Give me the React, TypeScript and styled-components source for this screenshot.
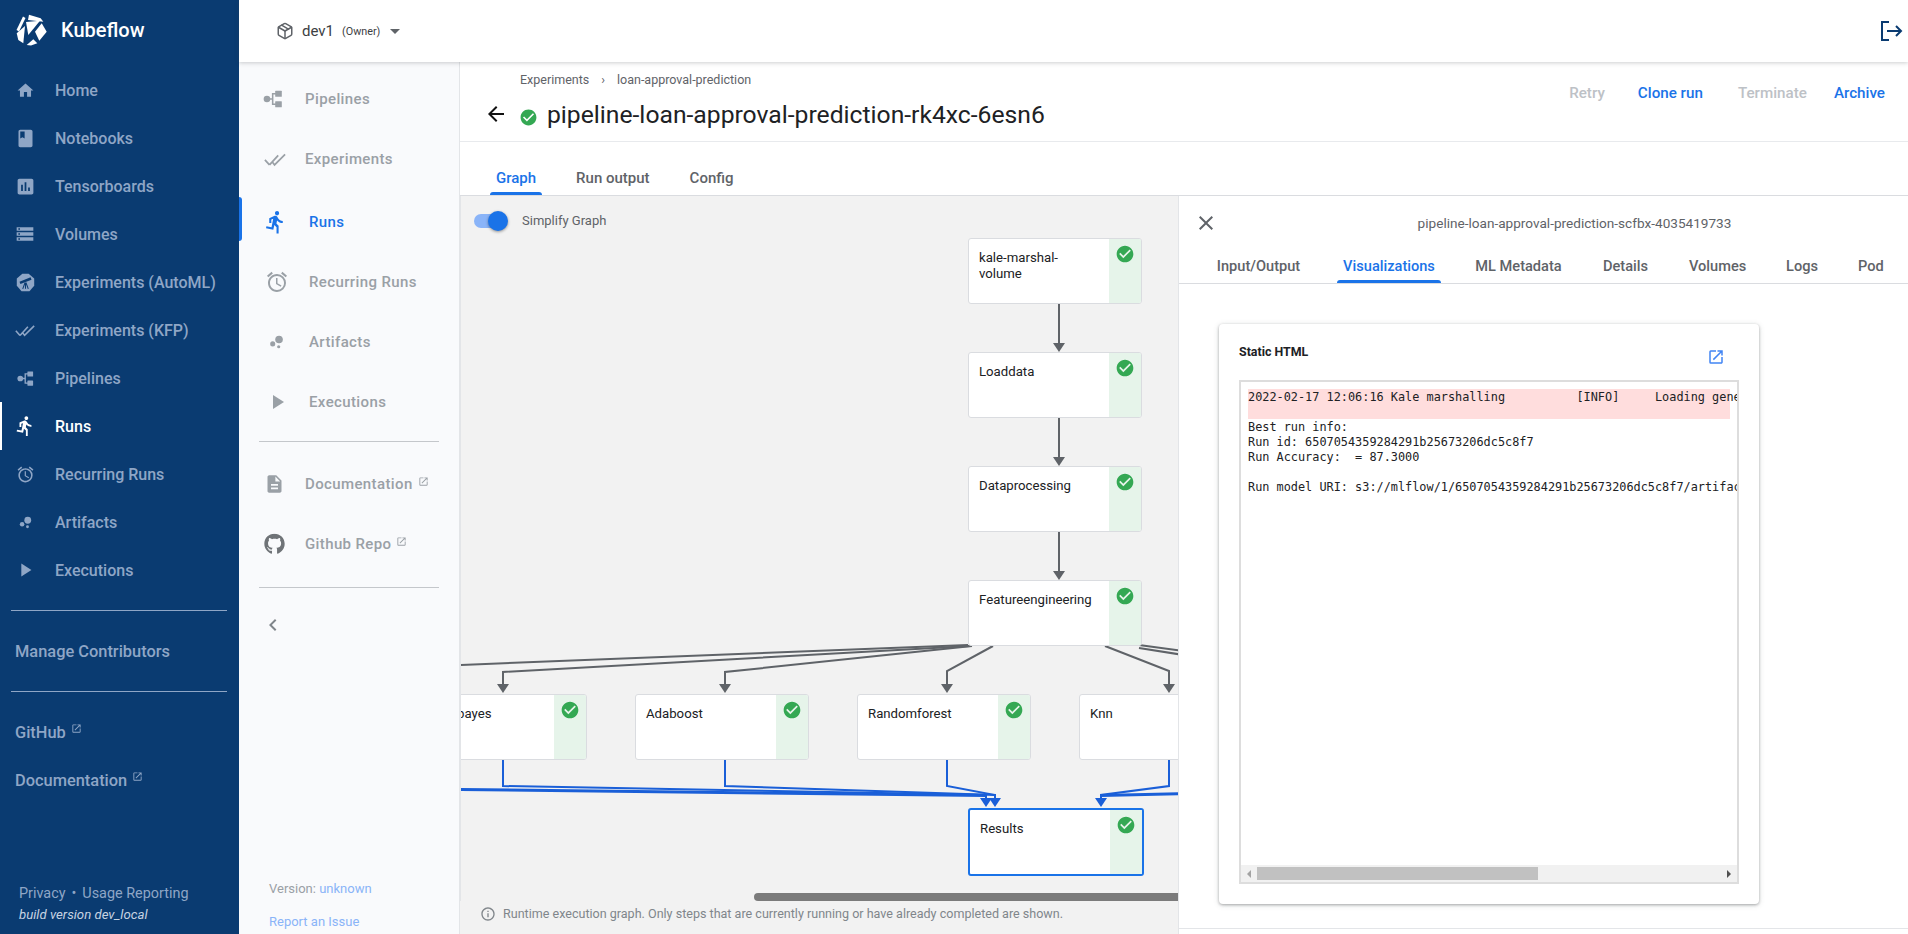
import type { ReactNode } from 'react';
import styled, { createGlobalStyle } from 'styled-components';
import { Package } from 'lucide-react';
import { FaGithub } from 'react-icons/fa';
import {
  MdAlarm,
  MdArrowBack,
  MdArrowDropDown,
  MdAssessment,
  MdBook,
  MdBubbleChart,
  MdCheckCircle,
  MdChevronLeft,
  MdClose,
  MdDescription,
  MdDirectionsRun,
  MdHome,
  MdInfoOutline,
  MdOpenInNew,
  MdPlayArrow,
  MdStorage,
} from 'react-icons/md';

const GlobalStyle = createGlobalStyle`
  html, body {
    margin: 0;
    height: 100%;
    overflow: hidden;
    background: #fff;
    font-family: Roboto, "Liberation Sans", sans-serif;
  }
  #root { height: 100%; }
  * { box-sizing: border-box; }
`;

const Page = styled.div`
  display: flex;
  width: 1908px;
  height: 934px;
  overflow: hidden;
`;

/* ---------- dark left navigation ---------- */

const LeftNav = styled.nav`
  width: 239px;
  flex: none;
  display: flex;
  flex-direction: column;
  background: #0a3b71;
  color: #8fa6c6;
`;

const Brand = styled.div`
  height: 66px;
  display: flex;
  align-items: flex-start;
  gap: 13px;
  padding: 14px 0 0 16px;
  color: #fff;
  font-size: 20px;
  font-weight: 500;
  line-height: 32px;
`;

const LeftItem = styled.div<{ $active?: boolean }>`
  position: relative;
  height: 48px;
  display: flex;
  align-items: center;
  font-size: 16px;
  font-weight: 500;
  color: ${({ $active }) => ($active ? '#fff' : '#8fa6c6')};
  border-left: 2px solid ${({ $active }) => ($active ? '#fff' : 'transparent')};
`;

const LeftIcon = styled.span`
  width: 46px;
  margin-right: 7px;
  display: flex;
  align-items: center;
  justify-content: center;
`;

const LeftRule = styled.hr<{ $top?: number }>`
  width: 216px;
  margin: ${({ $top }) => $top ?? 0}px 0 0 11px;
  border: 0;
  border-top: 1px solid #8fa6c6;
`;

const LeftLink = styled.div<{ $height: number; $top?: number }>`
  height: ${({ $height }) => $height}px;
  margin-top: ${({ $top }) => $top ?? 0}px;
  display: flex;
  align-items: center;
  padding-left: 15px;
  font-size: 16.4px;
  font-weight: 500;
`;

const Sup = styled.span<{ $up?: number }>`
  display: inline-flex;
  margin: -${({ $up }) => $up ?? 8}px 0 0 5px;
  font-size: 11px;
`;

const LeftFooter = styled.div`
  margin-top: auto;
  padding: 0 0 9px 19px;
  font-size: 14.4px;
  line-height: 21px;
`;

const Dot = styled.span`
  margin: 0 6px;
`;

const BuildLine = styled.div`
  color: #c7d3e2;
  font-size: 13.2px;
  font-style: italic;
`;

/* ---------- top bar and body ---------- */

const RightColumn = styled.div`
  flex: 1;
  min-width: 0;
  display: flex;
  flex-direction: column;
`;

const TopBar = styled.header`
  position: relative;
  z-index: 2;
  height: 62px;
  flex: none;
  display: flex;
  align-items: center;
  padding: 0 5px 0 37px;
  background: #fff;
  box-shadow: 0 1px 4px rgba(60, 64, 67, 0.25);
  color: #5f6368;
`;

const Namespace = styled.span`
  margin-left: 8px;
  font-size: 15px;
  color: #3c4043;
`;

const Owner = styled.span`
  margin: 0 3px 0 8px;
  font-size: 10.8px;
  color: #3c4043;
`;

const LogoutSlot = styled.span`
  display: flex;
  margin-left: auto;
`;

const Body = styled.div`
  flex: 1;
  min-height: 0;
  display: flex;
`;

/* ---------- secondary navigation ---------- */

const SideNav = styled.aside`
  width: 221px;
  flex: none;
  display: flex;
  flex-direction: column;
  padding-top: 7px;
  background: #f9fafc;
  border-right: 1px solid #e3e5e8;
  color: #9aa0a6;
`;

const SideItem = styled.div<{ $active?: boolean; $indent?: number; $top?: number }>`
  position: relative;
  height: 60px;
  margin-top: ${({ $top }) => $top ?? 0}px;
  display: flex;
  align-items: center;
  font-size: 15px;
  font-weight: 500;
  letter-spacing: 0.38px;
  color: ${({ $active }) => ($active ? '#1a73e8' : '#9aa0a6')};
  padding-left: ${({ $indent }) => $indent ?? 66}px;
`;

const SideIcon = styled.span<{ $left?: number; $color?: string }>`
  position: absolute;
  left: ${({ $left }) => $left ?? 26}px;
  top: 50%;
  transform: translateY(-50%);
  display: flex;
  font-size: 24px;
  color: ${({ $color }) => $color ?? '#9aa0a6'};
`;

const ActiveBar = styled.span`
  position: absolute;
  left: 0;
  top: 5px;
  width: 3px;
  height: 44px;
  background: #1a73e8;
  border-radius: 0 3px 3px 0;
`;

const SideRule = styled.hr<{ $top: number }>`
  width: 180px;
  margin: ${({ $top }) => $top}px 0 12px 20px;
  border: 0;
  border-top: 1px solid #c4c7cb;
`;

const Collapse = styled.div`
  display: flex;
  margin: 13px 0 0 22px;
  font-size: 24px;
  color: #80868b;
`;

const SideFooter = styled.div`
  margin-top: auto;
  padding-left: 30px;
  font-size: 13px;
  color: #9aa0a6;
`;

const FooterLine = styled.div<{ $height: number }>`
  height: ${({ $height }) => $height}px;
  display: flex;
  align-items: center;
`;

const SoftLink = styled.span`
  color: #8ab4f8;
  white-space: pre;
`;

/* ---------- run details ---------- */

const Main = styled.main`
  flex: 1;
  min-width: 0;
  display: flex;
  flex-direction: column;
`;

const RunHeader = styled.div`
  height: 80px;
  flex: none;
  display: flex;
  justify-content: space-between;
  border-bottom: 1px solid #e8eaed;
`;

const TitleBlock = styled.div`
  display: flex;
  flex-direction: column;
`;

const Breadcrumb = styled.div`
  height: 34px;
  display: flex;
  align-items: center;
  padding: 0 0 0 60px;
  font-size: 12.5px;
  color: #5f6368;
`;

const CrumbArrow = styled.span`
  margin: 0 12px;
`;

const TitleRow = styled.div`
  display: flex;
  align-items: center;
  height: 36px;
  padding-left: 24px;
`;

const BackIcon = styled.span`
  display: flex;
  font-size: 24px;
  color: #111;
`;

const RunCheck = styled.span`
  display: flex;
  margin: 7px 0 0 11px;
  font-size: 19px;
  color: #34a853;
`;

const RunTitle = styled.h1`
  margin: 0 0 0 9px;
  font-size: 24.7px;
  font-weight: 400;
  color: #202124;
  white-space: nowrap;
`;

const Actions = styled.div`
  display: flex;
  padding: 20px 15px 0 0;
`;

const ActionButton = styled.button<{ $enabled?: boolean; $gap: number }>`
  height: 22px;
  margin-left: ${({ $gap }) => $gap}px;
  padding: 0 8px;
  border: 0;
  background: none;
  font: 500 15.2px Roboto, sans-serif;
  color: ${({ $enabled }) => ($enabled ? '#1a73e8' : '#bdc1c6')};
`;

const TabRow = styled.div<{ $start: number; $gap: number; $height: number }>`
  height: ${({ $height }) => $height}px;
  flex: none;
  display: flex;
  align-items: flex-end;
  gap: ${({ $gap }) => $gap}px;
  padding-left: ${({ $start }) => $start}px;
  border-bottom: 1px solid #dadce0;
`;

const Tab = styled.div<{ $active?: boolean; $width?: number; $size?: number }>`
  position: relative;
  width: ${({ $width }) => ($width ? `${$width}px` : 'auto')};
  height: 28px;
  padding: 1px 6px 0;
  text-align: center;
  white-space: nowrap;
  font-size: ${({ $size }) => $size ?? 15}px;
  font-weight: 500;
  line-height: 20px;
  color: ${({ $active }) => ($active ? '#1a73e8' : '#5f6368')};

  &::after {
    content: '';
    position: absolute;
    left: 0;
    right: 0;
    bottom: 0;
    height: 3px;
    border-radius: 3px 3px 0 0;
    background: ${({ $active }) => ($active ? '#1a73e8' : 'transparent')};
  }
`;

const Content = styled.div`
  flex: 1;
  min-height: 0;
  display: flex;
`;

/* ---------- graph ---------- */

const GraphColumn = styled.section`
  flex: 1;
  min-width: 0;
  display: flex;
  flex-direction: column;
  background: #f2f2f2;
`;

const Canvas = styled.div`
  position: relative;
  flex: 1;
  overflow: hidden;
  border-left: 1px solid #e3e5e8;
`;

const ToggleRow = styled.div`
  position: absolute;
  left: 13px;
  top: 17px;
  display: flex;
  align-items: center;
  font-size: 13px;
  color: #5f6368;
`;

const ToggleTrack = styled.span`
  position: relative;
  width: 32px;
  height: 14px;
  margin-right: 16px;
  border-radius: 7px;
  background: #8ab4f8;
`;

const ToggleThumb = styled.span`
  position: absolute;
  top: -3px;
  right: -2px;
  width: 20px;
  height: 20px;
  border-radius: 50%;
  background: #1a73e8;
  box-shadow: 0 1px 3px rgba(0, 0, 0, 0.4);
`;

const Edges = styled.svg`
  position: absolute;
  left: -1px;
  top: 0;
`;

const NodeBox = styled.div<{ $x: number; $y: number; $selected?: boolean }>`
  position: absolute;
  left: ${({ $x }) => $x - 461}px;
  top: ${({ $y }) => $y - 196}px;
  width: ${({ $selected }) => ($selected ? 176 : 174)}px;
  height: ${({ $selected }) => ($selected ? 68 : 66)}px;
  display: flex;
  background: #fff;
  border: ${({ $selected }) => ($selected ? '2px solid #1a73e8' : '1px solid #dadce0')};
  border-radius: 3px;
  overflow: hidden;
`;

const NodeLabel = styled.div`
  flex: 1;
  min-width: 0;
  padding: 11px 10px 0 10px;
  font-size: 13.2px;
  line-height: 16px;
  color: #202124;
`;

const NodeStatus = styled.div`
  width: 32px;
  flex: none;
  padding: 5px 0 0 6px;
  font-size: 20px;
  color: #34a853;
  background: #e6f4ea;
`;

const HScroll = styled.div`
  position: absolute;
  left: 293px;
  right: 0;
  bottom: 0;
  height: 8px;
  border-radius: 4px 0 0 4px;
  background: #7b7b7b;
`;

const GraphNote = styled.div`
  height: 33px;
  flex: none;
  display: flex;
  align-items: center;
  padding: 0 0 8px 20px;
  font-size: 12.55px;
  color: #80868b;
`;

const NoteIcon = styled.span`
  display: flex;
  margin-right: 7px;
  font-size: 16px;
`;

/* ---------- side panel ---------- */

const Panel = styled.section`
  width: 730px;
  flex: none;
  display: flex;
  flex-direction: column;
  background: #fff;
  border-left: 1px solid #e3e5e8;
`;

const PanelHead = styled.div`
  height: 54px;
  flex: none;
  display: flex;
  align-items: center;
  padding-left: 15px;
`;

const CloseIcon = styled.span`
  display: flex;
  font-size: 24px;
  color: #5f6368;
`;

const PanelTitle = styled.div`
  flex: 1;
  padding-left: 23px;
  text-align: center;
  font-size: 13.6px;
  color: #5f6368;
`;

const PanelBody = styled.div`
  flex: 1;
  min-height: 0;
  padding: 40px 0 0 40px;
`;

const Card = styled.div`
  width: 540px;
  height: 580px;
  display: flex;
  flex-direction: column;
  padding: 20px;
  background: #fff;
  border-radius: 4px;
  box-shadow: 0 1px 3px rgba(60, 64, 67, 0.4), 0 1px 6px rgba(60, 64, 67, 0.15);
`;

const CardHead = styled.div`
  height: 36px;
  flex: none;
  display: flex;
  justify-content: space-between;
  padding-right: 14px;
`;

const CardTitle = styled.div`
  font-size: 12.4px;
  font-weight: 700;
  line-height: 16px;
  color: #202124;
`;

const LaunchIcon = styled.span`
  display: flex;
  margin-top: 4px;
  font-size: 18px;
  color: #4285f4;
`;

const Frame = styled.div`
  flex: 1;
  min-height: 0;
  display: flex;
  flex-direction: column;
  border: 2px solid #dddddd;
`;

const LogView = styled.pre`
  flex: 1;
  min-height: 0;
  margin: 0;
  padding: 7px 0 0 7px;
  overflow: hidden;
  font-family: "DejaVu Sans Mono", "Liberation Mono", monospace;
  font-size: 11.87px;
  line-height: 15px;
  color: #202124;
`;

const ErrorLine = styled.div`
  width: 482px;
  height: 30px;
  margin-bottom: 1px;
  padding-top: 1px;
  background: #ffdddd;
  white-space: pre;
`;

const ScrollTrack = styled.div`
  height: 17px;
  flex: none;
  display: flex;
  align-items: center;
  justify-content: space-between;
  padding: 0 6px;
  background: #f1f1f1;
`;

const ScrollThumb = styled.div`
  width: 281px;
  height: 13px;
  margin-right: auto;
  margin-left: 6px;
  background: #c1c1c1;
`;

const ScrollArrow = styled.span<{ $right?: boolean }>`
  width: 0;
  height: 0;
  border-top: 4px solid transparent;
  border-bottom: 4px solid transparent;
  border-left: ${({ $right }) => ($right ? '4px solid #505050' : '0')};
  border-right: ${({ $right }) => ($right ? '0' : '4px solid #a3a3a3')};
`;

const PanelRule = styled.hr`
  margin: 24px 0 0 -40px;
  border: 0;
  border-top: 1px solid #e3e5e8;
`;

/* ---------- drawn icons ---------- */

const KubeflowLogo = () => (
  <svg width="32" height="32" viewBox="0 0 32 32" fill="#fff">
    <path d="M7 2.500 9.500 4 3 17.500.5 16z" />
    <path d="M13 .7 24.700 4.300 27.300 7.700 12 6z" />
    <path d="M10 8 24 6.700 12.300 21z" />
    <path d="M25.700 9.300 30.700 17.700 23.300 26.700 19 17.700z" />
    <path d="M.7 19.300 9 12 7.300 29.300 2.300 26z" />
    <path d="M10.700 31 17.300 25.300 21.300 29.300 15 31.500z" />
  </svg>
);

const KfpChecks = ({ size = 20 }: { size?: number }) => (
  <svg width={size} height={size} viewBox="0 0 24 24" fill="none" stroke="currentColor" strokeWidth="1.9">
    <path d="M1 13l5 5.500M6 18.500 15.500 8M8.500 14.500l3 4L23 7" />
  </svg>
);

const PipelineMark = ({ size = 20 }: { size?: number }) => (
  <svg width={size} height={size} viewBox="0 0 20 20" fill="currentColor">
    <circle cx="4.500" cy="10" r="3" />
    <rect x="12" y="2.500" width="6" height="5.500" rx="0.500" />
    <rect x="12" y="12" width="6" height="5.500" rx="0.500" />
    <path d="M4 9.300h5V4.500h4v1.400h-2.600v8.200H13v1.400H9v-4.800H4z" />
  </svg>
);

const KatibMark = () => (
  <svg width="19" height="19" viewBox="0 0 24 24">
    <path fill="currentColor" d="M8 1h8l7 6v9l-6 7H7l-6-7V7z" />
    <path stroke="#0a3b71" strokeWidth="3.200" d="M5 12.500 19 7" />
    <path stroke="#0a3b71" strokeWidth="1.300" d="M11.500 12l-3 8M12 12v8M12.500 12l3 8" />
  </svg>
);

const LogoutMark = () => (
  <svg width="22" height="22" viewBox="0 0 22 22" fill="none" stroke="#0a3b71" strokeWidth="2">
    <path d="M8 2H1v18h7M6 11h14M15 6l5 5-5 5" />
  </svg>
);

/* ---------- data ---------- */

const leftItems: { label: string; icon: ReactNode; active?: boolean }[] = [
  { label: 'Home', icon: <MdHome size={19} /> },
  { label: 'Notebooks', icon: <MdBook size={21} /> },
  { label: 'Tensorboards', icon: <MdAssessment size={21} /> },
  { label: 'Volumes', icon: <MdStorage size={20} /> },
  { label: 'Experiments (AutoML)', icon: <KatibMark /> },
  { label: 'Experiments (KFP)', icon: <KfpChecks /> },
  { label: 'Pipelines', icon: <PipelineMark size={19} /> },
  { label: 'Runs', icon: <MdDirectionsRun size={22} />, active: true },
  { label: 'Recurring Runs', icon: <MdAlarm size={19} /> },
  { label: 'Artifacts', icon: <MdBubbleChart size={17} /> },
  { label: 'Executions', icon: <MdPlayArrow size={22} /> },
];

const graphNodes = [
  { label: 'kale-marshal-volume', x: 968, y: 238 },
  { label: 'Loaddata', x: 968, y: 352 },
  { label: 'Dataprocessing', x: 968, y: 466 },
  { label: 'Featureengineering', x: 968, y: 580 },
  { label: 'Naivebayes', x: 413, y: 694 },
  { label: 'Adaboost', x: 635, y: 694 },
  { label: 'Randomforest', x: 857, y: 694 },
  { label: 'Knn', x: 1079, y: 694 },
];

const panelTabs = [
  { label: 'Input/Output', width: 101 },
  { label: 'Visualizations', width: 104, active: true },
  { label: 'ML Metadata', width: 99 },
  { label: 'Details', width: 59 },
  { label: 'Volumes', width: 69 },
  { label: 'Logs', width: 44 },
  { label: 'Pod', width: 36 },
];

const grayEdges = [
  'M1059 304V346',
  'M1059 418V460',
  'M1059 532V574',
  'M968 645 460 665',
  'M970 646 503 672V688',
  'M972 646 725 672V688',
  'M993 646 947 671V688',
  'M1105 646 1169 671V688',
  'M1139 645 1190 652',
  'M1139 648 1190 656',
];

const blueEdges = [
  'M503 760V786L986 795V802',
  'M725 760V786L995 795V802',
  'M947 760V786L995 795V802',
  'M1169 760V786L1101 795V802',
  'M455 789 986 795',
  'M455 790 986 796',
  'M1190 793 1101 795',
  'M1190 794 1101 796',
];

const grayHeads = [1059, 1059, 1059, 503, 725, 947, 1169];
const grayHeadTips = [352, 466, 580, 693, 693, 693, 693];
const blueHeads = [986, 995, 1101];

const App = () => (
  <Page>
    <GlobalStyle />
    <LeftNav>
      <Brand>
        <KubeflowLogo />
        Kubeflow
      </Brand>
      {leftItems.map(({ label, icon, active }) => (
        <LeftItem key={label} $active={active}>
          <LeftIcon>{icon}</LeftIcon>
          {label}
        </LeftItem>
      ))}
      <LeftRule $top={16} />
      <LeftLink $height={80}>Manage Contributors</LeftLink>
      <LeftRule />
      <LeftLink $height={48} $top={16}>
        GitHub
        <Sup><MdOpenInNew /></Sup>
      </LeftLink>
      <LeftLink $height={48}>
        Documentation
        <Sup><MdOpenInNew /></Sup>
      </LeftLink>
      <LeftFooter>
        <div>
          Privacy<Dot>•</Dot>Usage Reporting
        </div>
        <BuildLine>build version dev_local</BuildLine>
      </LeftFooter>
    </LeftNav>

    <RightColumn>
      <TopBar>
        <Package size={18} strokeWidth={2} />
        <Namespace>dev1</Namespace>
        <Owner>(Owner)</Owner>
        <MdArrowDropDown size={24} />
        <LogoutSlot><LogoutMark /></LogoutSlot>
      </TopBar>
      <Body>
        <SideNav>
          <SideItem>
            <SideIcon $left={23}><PipelineMark size={22} /></SideIcon>
            Pipelines
          </SideItem>
          <SideItem>
            <SideIcon $left={25}><KfpChecks size={22} /></SideIcon>
            Experiments
          </SideItem>
          <SideItem $active $indent={70} $top={3}>
            <ActiveBar />
            <SideIcon $left={24} $color="#1a73e8"><MdDirectionsRun size={25} /></SideIcon>
            Runs
          </SideItem>
          <SideItem $indent={70}>
            <SideIcon $left={26}><MdAlarm /></SideIcon>
            Recurring Runs
          </SideItem>
          <SideItem $indent={70}>
            <SideIcon $left={28}><MdBubbleChart size={19} /></SideIcon>
            Artifacts
          </SideItem>
          <SideItem $indent={70}>
            <SideIcon $left={26}><MdPlayArrow /></SideIcon>
            Executions
          </SideItem>
          <SideRule $top={9} />
          <SideItem>
            <SideIcon $left={25}><MdDescription size={21} /></SideIcon>
            Documentation
            <Sup $up={6}><MdOpenInNew /></Sup>
          </SideItem>
          <SideItem>
            <SideIcon $left={25}><FaGithub size={21} color="#6f7377" /></SideIcon>
            Github Repo
            <Sup $up={6}><MdOpenInNew /></Sup>
          </SideItem>
          <SideRule $top={13} />
          <Collapse><MdChevronLeft /></Collapse>
          <SideFooter>
            <FooterLine $height={40}>
              Version:&nbsp;<SoftLink>unknown</SoftLink>
            </FooterLine>
            <FooterLine $height={26}>
              <SoftLink>Report an Issue</SoftLink>
            </FooterLine>
          </SideFooter>
        </SideNav>

        <Main>
          <RunHeader>
            <TitleBlock>
              <Breadcrumb>
                Experiments<CrumbArrow>›</CrumbArrow>loan-approval-prediction
              </Breadcrumb>
              <TitleRow>
                <BackIcon><MdArrowBack /></BackIcon>
                <RunCheck><MdCheckCircle /></RunCheck>
                <RunTitle>pipeline-loan-approval-prediction-rk4xc-6esn6</RunTitle>
              </TitleRow>
            </TitleBlock>
            <Actions>
              <ActionButton $gap={0}>Retry</ActionButton>
              <ActionButton $enabled $gap={17}>Clone run</ActionButton>
              <ActionButton $gap={19}>Terminate</ActionButton>
              <ActionButton $enabled $gap={11}>Archive</ActionButton>
            </Actions>
          </RunHeader>
          <TabRow $start={30} $gap={28} $height={54}>
            <Tab $active>Graph</Tab>
            <Tab>Run output</Tab>
            <Tab>Config</Tab>
          </TabRow>
          <Content>
            <GraphColumn>
              <Canvas>
                <Edges width="718" height="705" viewBox="460 196 718 705" fill="none">
                  {grayEdges.map((d) => (
                    <path key={d} d={d} stroke="#5f6368" strokeWidth="2" />
                  ))}
                  {grayHeads.map((x, i) => (
                    <path
                      key={`${x}-${i}`}
                      d={`M${x - 6} ${grayHeadTips[i] - 9}h12l-6 9z`}
                      fill="#5f6368"
                    />
                  ))}
                  {blueEdges.map((d) => (
                    <path key={d} d={d} stroke="#1a5fd8" strokeWidth="2" />
                  ))}
                  {blueHeads.map((x) => (
                    <path key={x} d={`M${x - 6} 798h12l-6 9z`} fill="#1a5fd8" />
                  ))}
                </Edges>
                <ToggleRow>
                  <ToggleTrack><ToggleThumb /></ToggleTrack>
                  Simplify Graph
                </ToggleRow>
                {graphNodes.map(({ label, x, y }) => (
                  <NodeBox key={label} $x={x} $y={y}>
                    <NodeLabel>{label}</NodeLabel>
                    <NodeStatus><MdCheckCircle /></NodeStatus>
                  </NodeBox>
                ))}
                <NodeBox $x={968} $y={808} $selected>
                  <NodeLabel>Results</NodeLabel>
                  <NodeStatus><MdCheckCircle /></NodeStatus>
                </NodeBox>
                <HScroll />
              </Canvas>
              <GraphNote>
                <NoteIcon><MdInfoOutline /></NoteIcon>
                Runtime execution graph. Only steps that are currently running or have already completed are shown.
              </GraphNote>
            </GraphColumn>

            <Panel>
              <PanelHead>
                <CloseIcon><MdClose /></CloseIcon>
                <PanelTitle>pipeline-loan-approval-prediction-scfbx-4035419733</PanelTitle>
              </PanelHead>
              <TabRow $start={29} $gap={28} $height={34}>
                {panelTabs.map(({ label, width, active }) => (
                  <Tab key={label} $active={active} $width={width} $size={14.6}>
                    {label}
                  </Tab>
                ))}
              </TabRow>
              <PanelBody>
                <Card>
                  <CardHead>
                    <CardTitle>Static HTML</CardTitle>
                    <LaunchIcon><MdOpenInNew /></LaunchIcon>
                  </CardHead>
                  <Frame>
                    <LogView>
                      <ErrorLine>2022-02-17 12:06:16 Kale marshalling          [INFO]     Loading generated notebook</ErrorLine>
                      {`Best run info:
Run id: 6507054359284291b25673206dc5c8f7
Run Accuracy:  = 87.3000

Run model URI: s3://mlflow/1/6507054359284291b25673206dc5c8f7/artifacts/model`}
                    </LogView>
                    <ScrollTrack>
                      <ScrollArrow />
                      <ScrollThumb />
                      <ScrollArrow $right />
                    </ScrollTrack>
                  </Frame>
                </Card>
                <PanelRule />
              </PanelBody>
            </Panel>
          </Content>
        </Main>
      </Body>
    </RightColumn>
  </Page>
);

export default App;
